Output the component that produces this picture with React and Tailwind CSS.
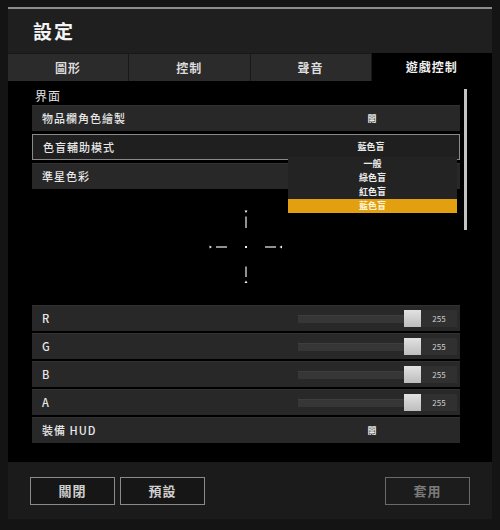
import React from "react";

const font = { fontFamily: '"Noto Sans CJK TC", "Noto Sans", sans-serif' };

function Row({ label, value, selected, children }) {
  return (
    <div
      className={
        "h-[26px] flex items-center shrink-0 " +
        (selected
          ? "bg-[#1f1f1f] border border-[#8a8a8a]"
          : "bg-[#282828] border-t border-[#323232]")
      }
    >
      <div className="flex-1 pl-[10px] text-[11px] font-medium text-[#e8e8e8] tracking-[1px]">{label}</div>
      {children ? (
        children
      ) : (
        <div className="w-[120px] mr-[28px] text-center text-[9px] font-bold text-[#e8e8e8]">{value}</div>
      )}
    </div>
  );
}

function Slider({ label }) {
  return (
    <Row label={label}>
      <div className="flex items-center mr-[3px]">
        <div className="w-[106px] h-[8px] bg-[#363636] border-t border-[#3e3e3e]" />
        <div className="w-[17px] h-[17px] bg-gradient-to-b from-[#e2e2e2] to-[#bdbdbd]" />
        <div className="w-[36px] h-[17px] bg-[#303030] flex items-center justify-center text-[8px] text-[#cfcfcf]">255</div>
      </div>
    </Row>
  );
}

function Crosshair() {
  return (
    <svg width="80" height="80" viewBox="0 0 80 80">
      <g stroke="#f2f2f2" strokeWidth="1.2">
        <line x1="40" y1="9.5" x2="40" y2="21" />
        <line x1="40" y1="59.5" x2="40" y2="70" />
        <line x1="10" y1="40" x2="21" y2="40" />
        <line x1="59" y1="40" x2="70" y2="40" />
      </g>
      <g fill="#f2f2f2">
        <polygon points="38.5,3.5 41.5,3.5 40,6" />
        <polygon points="38.5,76 41.5,76 40,73.5" />
        <polygon points="3.5,38.5 3.5,41.5 6,40" />
        <polygon points="76,38.5 76,41.5 73.5,40" />
        <rect x="39" y="39" width="2" height="2" />
      </g>
    </svg>
  );
}

export default function App() {
  const tabs = ["圖形", "控制", "聲音", "遊戲控制"];
  return (
    <div className="w-[500px] h-[530px] bg-[#141414] pt-[7px] pl-[8px]" style={font}>
      <div className="w-[484px] flex flex-col">
        <div className="h-[2px] bg-[#8c8c8c]" />
        <div className="h-[44px] bg-[#1f1f20] pl-[25px] flex items-center">
          <span className="text-[19px] font-bold text-[#f4f4f4] tracking-[2px]">設定</span>
        </div>
        <div className="h-[28px] flex bg-[#1a1a1a]">
          {tabs.map((t, i) => (
            <div
              key={t}
              className={
                "flex-1 flex items-center justify-center text-[12px] font-bold tracking-[1px] " +
                (i === 3
                  ? "bg-black text-[#f0f0f0]"
                  : "bg-[#2b2b2b] text-[#dcdcdc] border-r border-[#181818] border-t border-[#333]")
              }
            >
              {t}
            </div>
          ))}
        </div>
        <div className="h-[381px] bg-black flex">
          <div className="w-[24px] shrink-0" />
          <div className="w-[428px] flex flex-col pt-[8px]">
            <div className="h-[16px] pl-[3px] text-[12px] leading-[14px] text-[#e2e2e2] tracking-[1px]">界面</div>
            <div className="flex flex-col gap-[3px] relative">
              <Row label="物品欄角色繪製" value="開" />
              <Row label="色盲輔助模式" value="藍色盲" selected />
              <Row label="準星色彩" value="" />
              <div className="absolute left-[256px] top-[52px] w-[169px] bg-[#232323] flex flex-col text-[9px] font-bold text-[#ececec]">
                <div className="h-[14px] flex items-center justify-center">一般</div>
                <div className="h-[14px] flex items-center justify-center">綠色盲</div>
                <div className="h-[14px] flex items-center justify-center">紅色盲</div>
                <div className="h-[14px] flex items-center justify-center bg-[#e2a010] text-[#fff4d6]">藍色盲</div>
              </div>
            </div>
            <div className="h-[116px] flex items-center justify-center">
              <Crosshair />
            </div>
            <div className="flex flex-col gap-[2px]">
              <Slider label="R" />
              <Slider label="G" />
              <Slider label="B" />
              <Slider label="A" />
              <Row label="裝備 HUD" value="開" />
            </div>
          </div>
          <div className="w-[4px] shrink-0" />
          <div className="w-[3px] h-[141px] mt-[8px] bg-[#c4c4c4]" />
        </div>
        <div className="h-[57px] bg-[#1b1b1b] flex items-start pt-[15px] px-[22px]">
          <button className="w-[85px] h-[28px] border border-[#8a8a8a] bg-[#161616] text-[13px] font-bold text-[#cfcfcf] tracking-[1px]">關閉</button>
          <button className="w-[85px] h-[28px] ml-[5px] border border-[#8a8a8a] bg-[#161616] text-[13px] font-bold text-[#cfcfcf] tracking-[1px]">預設</button>
          <div className="flex-1" />
          <button className="w-[85px] h-[28px] border border-[#6a6a6a] bg-[#1c1c1c] text-[13px] font-bold text-[#7a7a7a] tracking-[1px]">套用</button>
        </div>
      </div>
    </div>
  );
}
